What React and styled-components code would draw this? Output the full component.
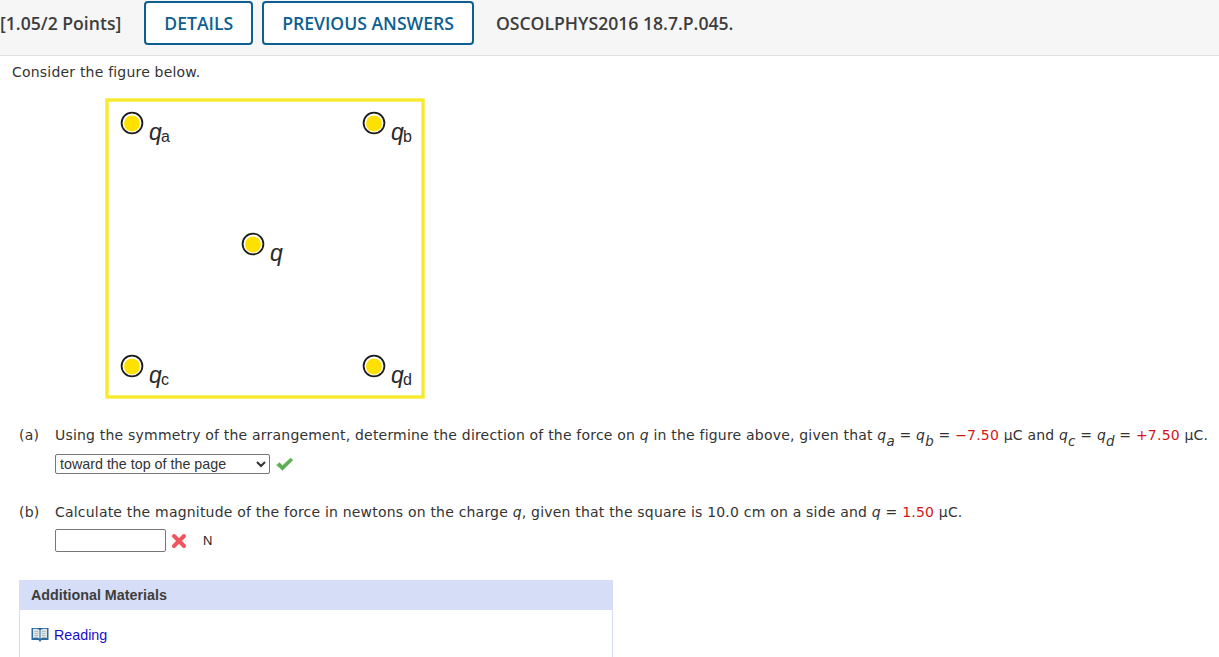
import React from "react";
import styled, { createGlobalStyle } from "styled-components";

const GlobalStyle = createGlobalStyle`
  html, body {
    margin: 0;
    padding: 0;
    background: #fff;
    overflow: hidden;
  }
`;

const Page = styled.div`
  width: 1219px;
  height: 657px;
  overflow: hidden;
  font-family: "DejaVu Sans", Verdana, sans-serif;
  font-size: 14px;
  letter-spacing: 0.2px;
  color: #333;
`;

const Header = styled.header`
  display: flex;
  align-items: center;
  box-sizing: border-box;
  height: 56px;
  padding-bottom: 9px;
  background: #f6f6f6;
  border-bottom: 1px solid #e0e0e0;
  font-family: "Open Sans", sans-serif;
  font-size: 17.6px;
  font-weight: 600;
  letter-spacing: 0;
  color: #3d3d3d;
`;

const Points = styled.span`
  margin-right: 23px;
`;

const HeaderButton = styled.div`
  display: flex;
  align-items: center;
  height: 44px;
  box-sizing: border-box;
  padding: 0 18px;
  margin-right: 9px;
  border: 2px solid #0d5f91;
  border-radius: 4px;
  background: #fff;
  color: #0d5f91;
`;

const QuestionId = styled.span`
  margin-left: 13px;
`;

const Intro = styled.p`
  margin: 0;
  padding: 8px 0 0 12px;
  height: 33px;
  box-sizing: border-box;
  line-height: 16px;
`;

const FigureWrap = styled.div`
  padding: 9px 0 0 105px;
`;

const PartRow = styled.div`
  display: flex;
  margin: ${(p) => p.$top}px 0 0 19px;
  line-height: 16px;
  white-space: nowrap;
`;

const PartLabel = styled.span`
  width: 36px;
`;

const Var = styled.i`
  font-style: italic;
`;

const Sub = styled.sub`
  font-size: 13.4px;
  font-style: italic;
  line-height: 0;
  vertical-align: -6px;
`;

const Given = styled.span`
  color: #d01818;
`;

const AnswerRow = styled.div`
  display: flex;
  align-items: center;
  margin: ${(p) => p.$top}px 0 0 55px;
  letter-spacing: 0;
`;

const SelectBox = styled.select`
  width: 215px;
  height: 20px;
  box-sizing: border-box;
  padding: 0;
  border: 1px solid #767676;
  border-radius: 2px;
  background: #fff;
  font-family: "Liberation Sans", Arial, sans-serif;
  font-size: 14.3px;
  color: #333;
`;

const TextBox = styled.input`
  width: 111px;
  height: 23px;
  box-sizing: border-box;
  border: 1px solid #767676;
  border-radius: 2px;
  background: #fff;
`;

const Unit = styled.span`
  margin-left: 16px;
  font-family: "Liberation Sans", Arial, sans-serif;
  font-size: 13px;
  color: #222;
`;

const Materials = styled.section`
  width: 594px;
  margin: 28px 0 0 19px;
  box-sizing: border-box;
  border: solid #d6def7;
  border-width: 0 1px;
  height: 90px;
`;

const MaterialsTitle = styled.div`
  height: 30px;
  margin: 0 -1px;
  padding-left: 12px;
  display: flex;
  align-items: center;
  background: #d6def7;
  font-family: "Liberation Sans", Arial, sans-serif;
  font-size: 14.3px;
  font-weight: 700;
  letter-spacing: 0;
  color: #3d3d3d;
`;

const ReadingLink = styled.a`
  display: flex;
  align-items: center;
  gap: 5px;
  margin: 17px 0 0 11px;
  font-family: "Liberation Sans", Arial, sans-serif;
  font-size: 14.3px;
  letter-spacing: 0;
  color: #1a0dc8;
  text-decoration: none;
`;

const charges = [
  { x: 27, y: 25, sub: "a" },
  { x: 269, y: 25, sub: "b" },
  { x: 148, y: 146, sub: "" },
  { x: 27, y: 268, sub: "c" },
  { x: 269, y: 268, sub: "d" },
];

const Figure = () => (
  <svg width="320" height="301" viewBox="0 0 320 301" style={{ display: "block" }}>
    <rect x="2" y="2" width="316" height="297" fill="#fff" stroke="#f7ea2e" strokeWidth="3.4" />
    {charges.map((c) => (
      <g key={c.x + "-" + c.y}>
        <circle cx={c.x} cy={c.y} r="10.4" fill="#fff" stroke="#1c1c1c" strokeWidth="1.8" />
        <circle cx={c.x} cy={c.y + 0.5} r="8" fill="#ffe100" />
        <text x={c.x + 17} y={c.y + 17} fontFamily="Liberation Sans" fontStyle="italic" fontSize="23" fill="#2a2a2a">q</text>
        <text x={c.x + 29} y={c.y + 19} fontFamily="Liberation Sans" fontSize="16" fill="#2a2a2a">{c.sub}</text>
      </g>
    ))}
  </svg>
);

const CheckIcon = () => (
  <svg width="20" height="16" viewBox="0 0 20 16" style={{ marginLeft: 5 }}>
    <path d="M1.5 9 L4.5 6.5 L7.5 9.5 L15.5 2 L18 4 L7.5 14.5 Z" fill="#5fae57" stroke="#7cc274" strokeWidth="0.6" />
  </svg>
);

const CrossIcon = () => (
  <svg width="16" height="16" viewBox="0 0 16 16" style={{ marginLeft: 5 }}>
    <path d="M3 3 L13 13 M13 3 L3 13" stroke="#f0545e" strokeWidth="4" strokeLinecap="round" />
  </svg>
);

const BookIcon = () => (
  <svg width="18" height="16" viewBox="0 0 18 16">
    <path d="M0.5 1 H17.5 V13 H10.5 L9 15 L7.5 13 H0.5 Z" fill="#2f6a9c" />
    <path d="M2 2 Q5.5 1 8.5 3 V11.5 Q5.5 10 2 11 Z M9.5 3 Q12.5 1 16 2 V11 Q12.5 10 9.5 11.5 Z" fill="#dfe6e8" />
    <path d="M3.5 4.5 H7 M3.5 6.5 H7 M3.5 8.5 H7 M11 4.5 H14.5 M11 6.5 H14.5 M11 8.5 H14.5" stroke="#9fb0bb" strokeWidth="0.8" />
  </svg>
);

export default function App() {
  return (
    <Page>
      <GlobalStyle />
      <Header>
        <Points>[1.05/2 Points]</Points>
        <HeaderButton>DETAILS</HeaderButton>
        <HeaderButton>PREVIOUS ANSWERS</HeaderButton>
        <QuestionId>OSCOLPHYS2016 18.7.P.045.</QuestionId>
      </Header>
      <Intro>Consider the figure below.</Intro>
      <FigureWrap>
        <Figure />
      </FigureWrap>
      <PartRow $top={28}>
        <PartLabel>(a)</PartLabel>
        <span>
          Using the symmetry of the arrangement, determine the direction of the force on <Var>q</Var> in the figure above, given that <Var>q</Var><Sub>a</Sub> = <Var>q</Var><Sub>b</Sub> = <Given>−7.50</Given> µC and <Var>q</Var><Sub>c</Sub> = <Var>q</Var><Sub>d</Sub> = <Given>+7.50</Given> µC.
        </span>
      </PartRow>
      <AnswerRow $top={11}>
        <SelectBox defaultValue="top">
          <option value="top">toward the top of the page</option>
        </SelectBox>
        <CheckIcon />
      </AnswerRow>
      <PartRow $top={30}>
        <PartLabel>(b)</PartLabel>
        <span>
          Calculate the magnitude of the force in newtons on the charge <Var>q</Var>, given that the square is 10.0 cm on a side and <Var>q</Var> = <Given>1.50</Given> µC.
        </span>
      </PartRow>
      <AnswerRow $top={9}>
        <TextBox type="text" />
        <CrossIcon />
        <Unit>N</Unit>
      </AnswerRow>
      <Materials>
        <MaterialsTitle>Additional Materials</MaterialsTitle>
        <ReadingLink href="#">
          <BookIcon />
          Reading
        </ReadingLink>
      </Materials>
    </Page>
  );
}
